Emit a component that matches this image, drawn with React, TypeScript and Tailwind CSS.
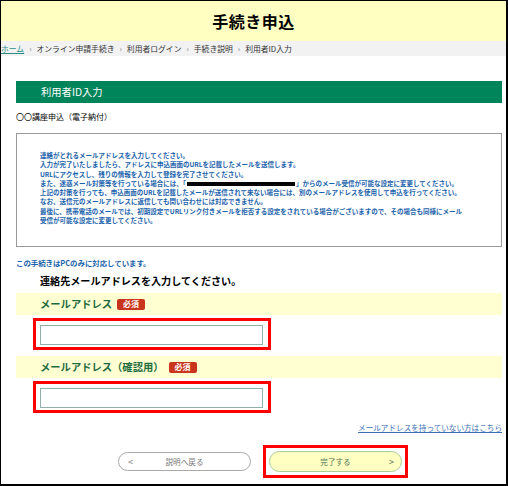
import React from "react";

const font = { fontFamily: '"Noto Sans CJK JP", "Noto Sans", sans-serif' };

const notes = [
  "連絡がとれるメールアドレスを入力してください。",
  "入力が完了いたしましたら、アドレスに申込画面のURLを記載したメールを送信します。",
  "URLにアクセスし、残りの情報を入力して登録を完了させてください。",
  null,
  "上記の対策を行っても、申込画面のURLを記載したメールが送信されて来ない場合には、別のメールアドレスを使用して申込を行ってください。",
  "なお、送信元のメールアドレスに返信しても問い合わせには対応できません。",
  "最後に、携帯電話のメールでは、初期設定でURLリンク付きメールを拒否する設定をされている場合がございますので、その場合も同様にメール",
  "受信が可能な設定に変更してください。",
];

const crumbs = ["オンライン申請手続き", "利用者ログイン", "手続き説明", "利用者ID入力"];

function Required() {
  return (
    <span className="ml-[5px] inline-flex h-[11px] items-center rounded-[2px] bg-[#c8351c] px-[6px] text-[8px] font-bold leading-none text-white">
      必須
    </span>
  );
}

function EmailField({ label }: { label: string }) {
  return (
    <>
      <div className="flex h-[22px] items-center bg-[#ffffd2] pl-[24px]">
        <span className="text-[10.3px] font-bold text-[#1e6b3f]">{label}</span>
        <Required />
      </div>
      <div className="ml-[17px] mt-[3px] h-[32px] w-[238px] border-[3px] border-[#ff0000] px-[4px] pt-[4px]">
        <input
          type="text"
          className="block h-[20px] w-[223px] border border-[#8fb0ab] bg-white outline-none"
        />
      </div>
    </>
  );
}

export default function App() {
  return (
    <div
      className="h-[486px] w-[508px] overflow-hidden border-b-2 border-l border-r-2 border-t border-black bg-white text-black"
      style={font}
    >
      <div className="flex h-[40px] items-center justify-center bg-[#ffffc2]">
        <h1 className="text-[16px] font-bold tracking-[0.5px]">手続き申込</h1>
      </div>
      <div className="flex h-[15px] items-center bg-[#f2f2f2] text-[7.8px] text-[#333]">
        <a className="text-[#2a8c84] underline">ホーム</a>
        {crumbs.map((c) => (
          <React.Fragment key={c}>
            <span className="mx-[5px] text-[#888]">›</span>
            <span>{c}</span>
          </React.Fragment>
        ))}
      </div>

      <div className="pl-[15px] pr-[4px]">
        <div className="mt-[25px] flex h-[22px] items-center bg-[#00845a] pl-[25px] text-[10.3px] text-white">
          利用者ID入力
        </div>
        <div className="mt-[8px] text-[8px] leading-[12px]">〇〇講座申込（電子納付）</div>

        <div className="mt-[10px] h-[114px] border border-[#9a9a9a] pl-[23px] pt-[17px] text-[6.5px] font-bold leading-[9.3px] text-[#1a62ab]">
          {notes.map((n, i) =>
            n === null ? (
              <div key={i} className="flex items-center whitespace-nowrap">
                また、迷惑メール対策等を行っている場合には、「
                <span className="mx-[1px] inline-block h-[4px] w-[108px] bg-black" />
                」からのメール受信が可能な設定に変更してください。
              </div>
            ) : (
              <div key={i} className="whitespace-nowrap">
                {n}
              </div>
            )
          )}
        </div>

        <div className="mt-[11px] text-[7.4px] font-bold leading-[10px] text-[#1a62ab]">
          この手続きはPCのみに対応しています。
        </div>
        <div className="mt-[6px] pl-[24px] text-[10.1px] font-bold leading-[14px]">
          連絡先メールアドレスを入力してください。
        </div>

        <div className="mt-[5px]">
          <EmailField label="メールアドレス" />
        </div>
        <div className="mt-[6px]">
          <EmailField label="メールアドレス（確認用）" />
        </div>

        <div className="mt-[9px] flex justify-end">
          <a className="text-[7.6px] text-[#3a6fb8] underline">メールアドレスを持っていない方はこちら</a>
        </div>

        <div className="mt-[12px] flex items-center pl-[102px]">
          <button className="relative flex h-[19px] w-[133px] items-center justify-center rounded-full border border-[#aaa] bg-white text-[7.6px] text-[#777]">
            <span className="absolute left-[9px] text-[9px]">&lt;</span>
            説明へ戻る
          </button>
          <div className="ml-[12px] h-[33px] w-[145px] border-[3px] border-[#ff0000] px-[3px] pt-[3px]">
            <button className="relative flex h-[21px] w-[133px] items-center justify-center rounded-full border-[1.5px] border-[#a9cf96] bg-[#ffffc2] text-[7.6px] text-[#4d7255]">
              完了する
              <span className="absolute right-[7px] text-[9px]">&gt;</span>
            </button>
          </div>
        </div>
      </div>
    </div>
  );
}
